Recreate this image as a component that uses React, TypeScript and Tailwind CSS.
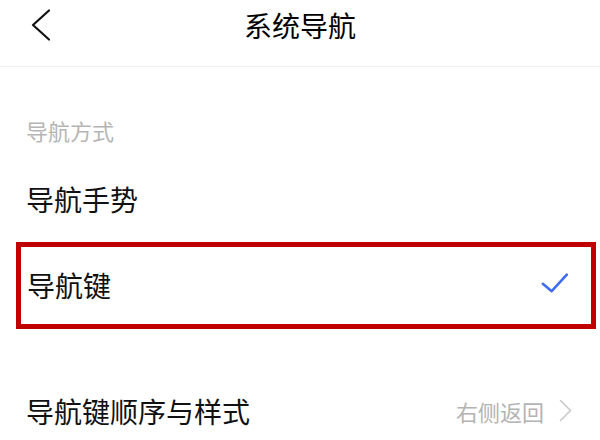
import * as React from 'react';

const font = { fontFamily: '"Noto Sans CJK SC", "Noto Sans", sans-serif' };

const BackIcon = () => (
  <svg width="20" height="32" viewBox="0 0 20 32" fill="none">
    <path d="M19 1.5 L3 16 L19 30.5" stroke="#111" strokeWidth="2.2" strokeLinecap="round" strokeLinejoin="round" />
  </svg>
);

const CheckIcon = () => (
  <svg width="28" height="24" viewBox="0 0 28 24" fill="none">
    <path d="M1.8 10.8 L10.7 18.2 L25.8 1.6" stroke="#3f6cf0" strokeWidth="2.6" strokeLinecap="round" strokeLinejoin="round" />
  </svg>
);

const ChevronRight = () => (
  <svg width="14" height="24" viewBox="0 0 14 24" fill="none">
    <path d="M1.5 1.5 L11.5 11.5 L1.5 21.5" stroke="#c9c9c9" strokeWidth="1.6" strokeLinecap="round" strokeLinejoin="round" />
  </svg>
);

export default function App() {
  return (
    <div className="w-[600px] h-[440px] bg-white overflow-hidden text-[#111]" style={font}>
      {/* Header */}
      <div className="h-[67px] border-b border-[#f1f1f1]">
        <div className="h-[49px] grid grid-cols-[1fr_auto_1fr] items-center">
          <div className="pl-[30px] flex items-center">
            <BackIcon />
          </div>
          <h1 className="text-[28px] leading-[34px] font-normal text-black">系统导航</h1>
          <div />
        </div>
      </div>

      {/* Section label */}
      <div className="h-[89px] pt-[51px] px-[26px]">
        <p className="text-[22px] leading-[24px] text-[#b5b5b5]">导航方式</p>
      </div>

      {/* Options */}
      <div className="h-[86px] px-[26px] flex items-center">
        <span className="text-[28px] leading-[34px]">导航手势</span>
      </div>

      <div className="h-[87px] ml-[16px] mr-[4px] border-[5px] border-[#c00000] pl-[6px] pr-[22px] pb-[2px] flex items-center justify-between">
        <span className="text-[28px] leading-[34px]">导航键</span>
        <CheckIcon />
      </div>

      <div className="h-[39px]" />

      <div className="h-[86px] pl-[26px] pr-[27px] flex items-center justify-between">
        <span className="text-[28px] leading-[34px]">导航键顺序与样式</span>
        <div className="flex items-center gap-[15px]">
          <span className="text-[22px] leading-[26px] text-[#b3b3b3]">右侧返回</span>
          <ChevronRight />
        </div>
      </div>
    </div>
  );
}
